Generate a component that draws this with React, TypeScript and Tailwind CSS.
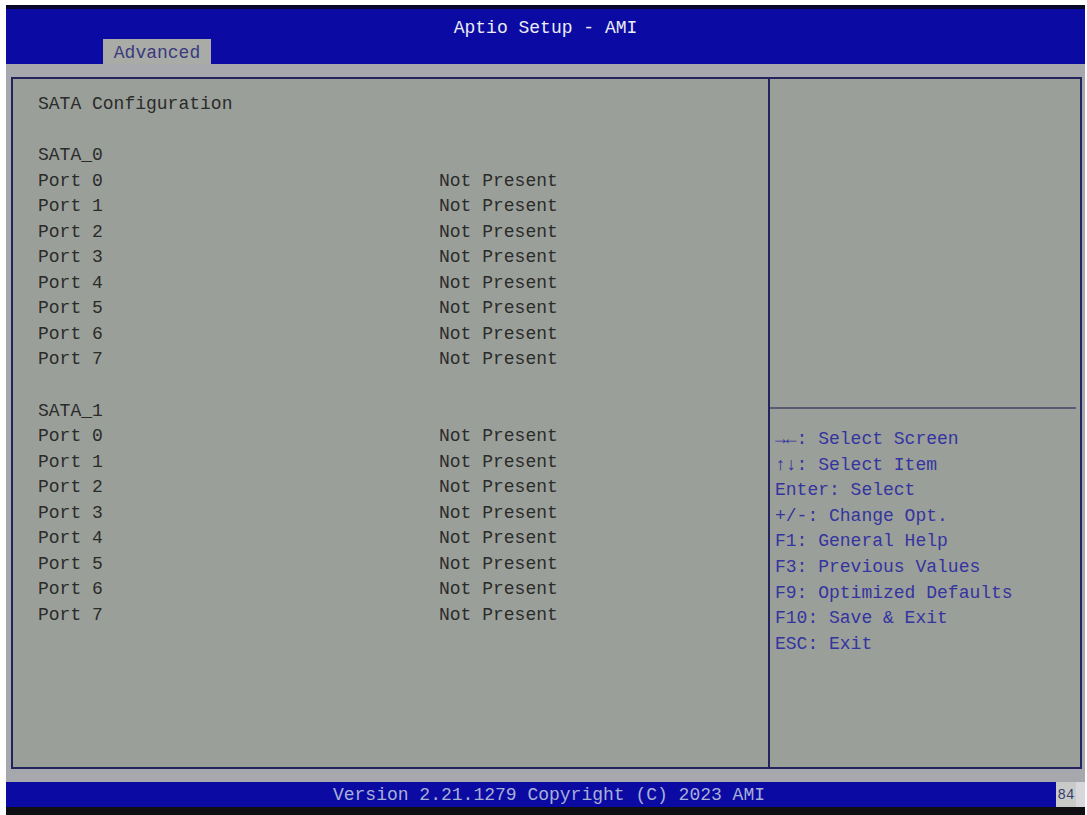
import React from "react";

const ports = [0, 1, 2, 3, 4, 5, 6, 7];
const help = [
  "→←: Select Screen",
  "↑↓: Select Item",
  "Enter: Select",
  "+/-: Change Opt.",
  "F1: General Help",
  "F3: Previous Values",
  "F9: Optimized Defaults",
  "F10: Save & Exit",
  "ESC: Exit",
];

function Row({ label, value }: { label: string; value?: string }) {
  return (
    <div className="grid grid-cols-[401px_1fr] h-[25.55px] leading-[25.55px] whitespace-pre">
      <span>{label}</span>
      <span>{value ?? ""}</span>
    </div>
  );
}

function Group({ name }: { name: string }) {
  return (
    <>
      <Row label={name} />
      {ports.map((p) => (
        <Row key={p} label={`Port ${p}`} value="Not Present" />
      ))}
    </>
  );
}

export default function App() {
  return (
    <div className="w-[1087px] h-[815px] bg-white overflow-hidden flex flex-col font-['Liberation_Mono',monospace] text-[18px]">
      <div className="h-[5px] shrink-0" />
      <div className="ml-[6px] w-[1079px] flex-1 flex flex-col bg-[#a7a8ad]">
        {/* header */}
        <div className="h-[59px] shrink-0 bg-[#0b0ba3] border-t-4 border-[#07072e] flex flex-col">
          <div className="h-[30px] pt-[7px] flex items-center justify-center text-[#ececf4] leading-none">
            Aptio Setup - AMI
          </div>
          <div className="flex-1 flex items-end">
            <div className="ml-[97px] w-[108px] h-[25px] pt-[2px] bg-[#a9aba6] text-[#3a3a7e] flex items-center justify-center leading-none">
              Advanced
            </div>
          </div>
        </div>
        <div className="h-[13px] shrink-0" />
        {/* panels */}
        <div className="ml-[5px] w-[1071px] h-[692px] shrink-0 border-2 border-[#23235e] bg-[#9b9f99] flex">
          <div className="w-[755px] pl-[25px] pt-[13px] text-[#2a2b2a]">
            <Row label="SATA Configuration" />
            <Row label="" />
            <Group name="SATA_0" />
            <Row label="" />
            <Group name="SATA_1" />
          </div>
          <div className="w-[2px] bg-[#23235e]" />
          <div className="flex-1 flex flex-col">
            <div className="h-[328px]" />
            <div className="h-[2px] bg-[#5a5a72] mr-[4px]" />
            <div className="pt-[18px] pl-[5px] text-[#3434a0]">
              {help.map((h) => (
                <div key={h} className="h-[25.6px] leading-[25.6px] whitespace-pre">
                  {h}
                </div>
              ))}
            </div>
          </div>
        </div>
        <div className="h-[13px] shrink-0" />
        {/* footer */}
        <div className="h-[25px] shrink-0 flex">
          <div className="w-[1050px] bg-[#0b0ba3] flex items-center justify-center text-[#a9b0d6] leading-none pl-[36px]">
            Version 2.21.1279 Copyright (C) 2023 AMI
          </div>
          <div className="w-[20px] bg-[#c9cbc8] text-[#3b3b6c] text-[14px] flex items-center justify-center leading-none">
            84
          </div>
          <div className="flex-1 bg-[#d8d8dc]" />
        </div>
        <div className="flex-1 bg-[#101014]" />
      </div>
    </div>
  );
}
